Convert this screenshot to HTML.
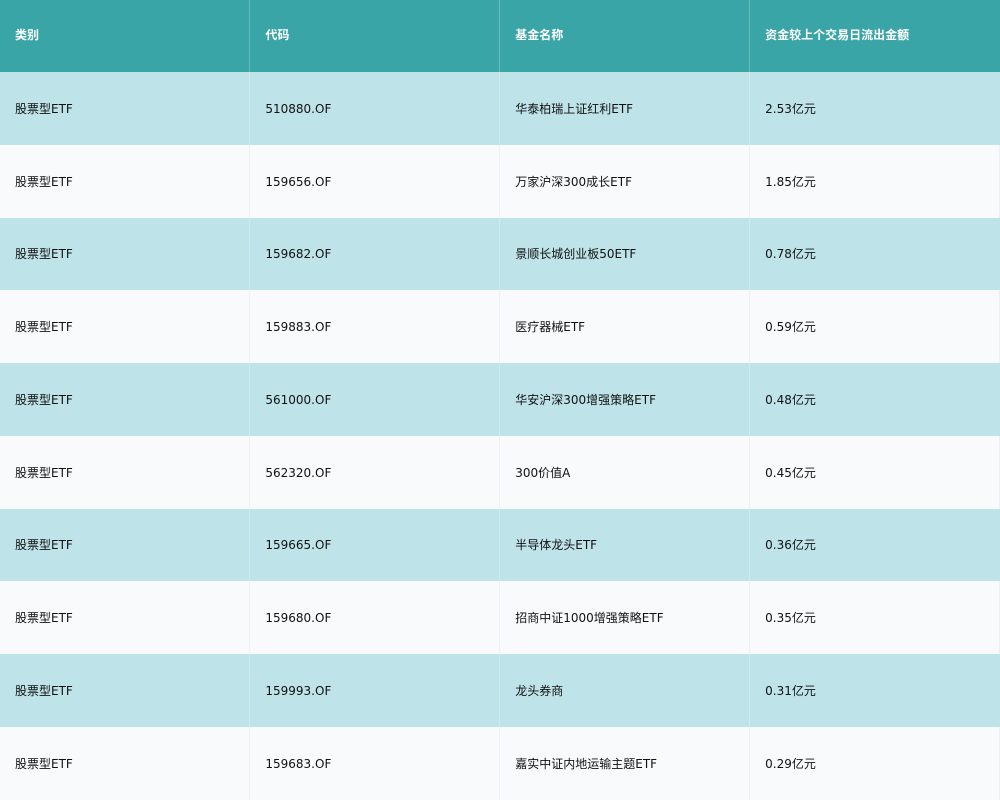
<!DOCTYPE html>
<html><head><meta charset="utf-8"><style>
body{margin:0;width:1000px;height:800px;overflow:hidden;background:#f8fafc;font-family:"DejaVu Sans","Noto Sans CJK SC",sans-serif;font-size:12px;color:#111}
table{border-collapse:collapse;width:1000px;table-layout:fixed}
td,th{height:72.75px;padding:0 0 0 15px;text-align:left;border-right:1px solid rgba(255,255,255,0.25);vertical-align:middle}
th{background:#3aa5a7;color:#fff;font-weight:bold;height:72px;padding-bottom:4px;box-sizing:border-box}
tr.a td{background:#bee4e9}
tr.b td{background:#f8fafc;border-right:1px solid #eef1f4}
td:last-child,th:last-child{border-right:none}
td:nth-child(2){padding-top:1px;box-sizing:border-box}
</style></head><body>
<table>
<tr><th>类别</th><th>代码</th><th>基金名称</th><th>资金较上个交易日流出金额</th></tr>
<tr class="a"><td>股票型ETF</td><td>510880.OF</td><td>华泰柏瑞上证红利ETF</td><td>2.53亿元</td></tr>
<tr class="b"><td>股票型ETF</td><td>159656.OF</td><td>万家沪深300成长ETF</td><td>1.85亿元</td></tr>
<tr class="a"><td>股票型ETF</td><td>159682.OF</td><td>景顺长城创业板50ETF</td><td>0.78亿元</td></tr>
<tr class="b"><td>股票型ETF</td><td>159883.OF</td><td>医疗器械ETF</td><td>0.59亿元</td></tr>
<tr class="a"><td>股票型ETF</td><td>561000.OF</td><td>华安沪深300增强策略ETF</td><td>0.48亿元</td></tr>
<tr class="b"><td>股票型ETF</td><td>562320.OF</td><td>300价值A</td><td>0.45亿元</td></tr>
<tr class="a"><td>股票型ETF</td><td>159665.OF</td><td>半导体龙头ETF</td><td>0.36亿元</td></tr>
<tr class="b"><td>股票型ETF</td><td>159680.OF</td><td>招商中证1000增强策略ETF</td><td>0.35亿元</td></tr>
<tr class="a"><td>股票型ETF</td><td>159993.OF</td><td>龙头券商</td><td>0.31亿元</td></tr>
<tr class="b"><td>股票型ETF</td><td>159683.OF</td><td>嘉实中证内地运输主题ETF</td><td>0.29亿元</td></tr>
</table>
</body></html>
